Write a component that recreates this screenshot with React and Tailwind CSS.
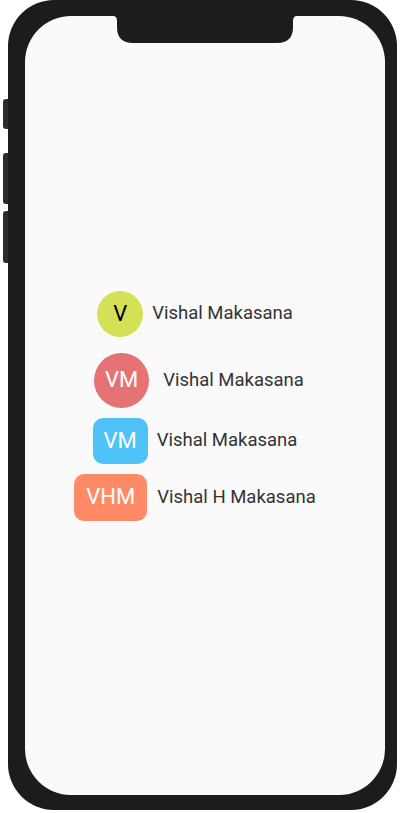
import React from "react";

const font = { fontFamily: "Roboto, 'Noto Sans', sans-serif" };

function Row({ children, name, gap, className = "" }) {
  return (
    <div className={`flex items-center ${className}`}>
      {children}
      <span className={`text-[18.5px] leading-none text-[#333333] ${gap}`}>{name}</span>
    </div>
  );
}

export default function App() {
  return (
    <div className="relative w-[403px] h-[813px] bg-white overflow-hidden" style={font}>
      {/* side buttons */}
      <div className="absolute left-[3px] top-[99px] w-[8px] h-[30px] rounded-l-[3px] bg-[#2b2b2b]" />
      <div className="absolute left-[3px] top-[153px] w-[8px] h-[51px] rounded-l-[3px] bg-[#2b2b2b]" />
      <div className="absolute left-[3px] top-[211px] w-[8px] h-[52px] rounded-l-[3px] bg-[#2b2b2b]" />

      <div className="relative ml-[8px] w-[389px] h-[810px] rounded-[46px] bg-[#1c1c1c] pl-[17px] pt-[16px] pr-[12px] pb-[15px]">
        <div className="w-full h-full rounded-[46px] bg-[#fafafa] flex flex-col items-center justify-center pr-[20px]">
          <Row name="Vishal Makasana" gap="ml-[9px]">
            <div className="w-[46px] h-[46px] rounded-full bg-[#d4e157] flex items-center justify-center text-[22px] text-black leading-none">
              V
            </div>
          </Row>
          <Row name="Vishal Makasana" gap="ml-[14px]" className="mt-[16px] ml-[8px]">
            <div className="w-[55px] h-[55px] rounded-full bg-[#e57373] flex items-center justify-center text-[22px] text-white leading-none">
              VM
            </div>
          </Row>
          <Row name="Vishal Makasana" gap="ml-[9px]" className="mt-[10px]">
            <div className="w-[55px] h-[46px] rounded-[10px] bg-[#4fc3f7] flex items-center justify-center text-[22px] text-white leading-none">
              VM
            </div>
          </Row>
          <Row name="Vishal H Makasana" gap="ml-[10px]" className="mt-[10px]">
            <div className="w-[73px] h-[47px] rounded-[10px] bg-[#ff8a65] flex items-center justify-center text-[22px] text-white leading-none">
              VHM
            </div>
          </Row>
        </div>
        {/* notch */}
        <svg
          className="absolute left-[105px] top-[16px]"
          width="184"
          height="27"
          viewBox="0 0 184 27"
        >
          <path
            d="M0 0 L184 0 Q180 0 180 5 L180 11 Q180 27 164 27 L20 27 Q4 27 4 11 L4 5 Q4 0 0 0 Z"
            fill="#1c1c1c"
          />
        </svg>
      </div>
    </div>
  );
}
